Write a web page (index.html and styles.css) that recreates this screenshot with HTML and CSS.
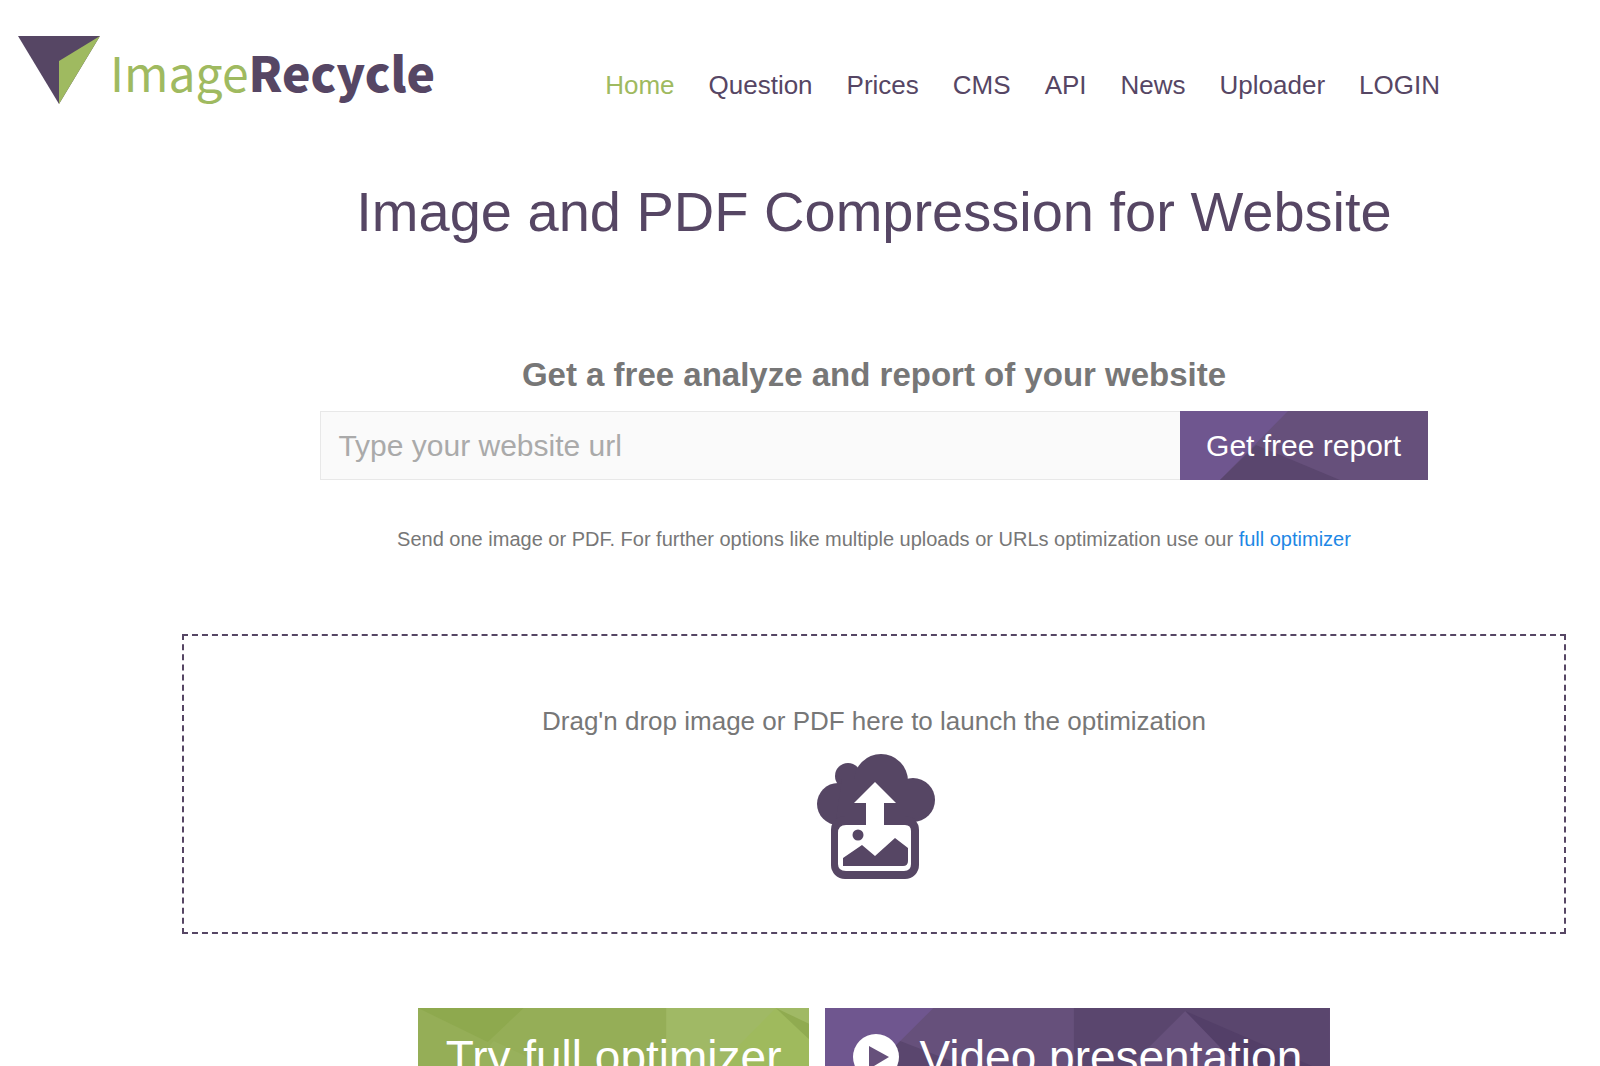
FILE: index.html
```html
<!DOCTYPE html>
<html lang="en">
<head>
    <meta charset="UTF-8">
    <meta name="viewport" content="width=device-width, initial-scale=1.0">
    <title>ImageRecycle</title>
    <link rel="stylesheet" href="styles.css">
</head>
<body>
    <header class="header">
        <a href="#" class="logo">
            <svg class="logo-mark" viewBox="0 0 82 68" aria-hidden="true">
                <path d="M0 0H82L41 68Z" fill="#564664"/>
                <path d="M82 0L41 25V68Z" fill="#9fba60"/>
            </svg>
            <span class="logo-text">Image<strong>Recycle</strong></span>
        </a>
        <nav class="nav">
            <a href="#" class="active">Home</a>
            <a href="#">Question</a>
            <a href="#">Prices</a>
            <a href="#">CMS</a>
            <a href="#">API</a>
            <a href="#">News</a>
            <a href="#">Uploader</a>
            <a href="#">LOGIN</a>
        </nav>
    </header>

    <main class="content">
        <h1>Image and PDF Compression for Website</h1>

        <form class="report">
            <label for="url">Get a free analyze and report of your website</label>
            <div class="report-row">
                <input type="text" id="url" placeholder="Type your website url">
                <button type="button" class="poly">
                    <svg class="poly-bg" viewBox="0 0 248 69" preserveAspectRatio="none" aria-hidden="true">
                        <path d="M0 0H108L40 69H0Z" fill="#6f568f"/>
                        <path d="M40 69L76 34L160 69Z" fill="#5a466e"/>
                    </svg>
                    <span>Get free report</span>
                </button>
            </div>
        </form>

        <p class="hint">Send one image or PDF. For further options like multiple uploads or URLs optimization use our <a href="#">full optimizer</a></p>

        <div class="dropzone">
            <p>Drag'n drop image or PDF here to launch the optimization</p>
            <svg class="upload-icon" viewBox="-4 0 122 126" aria-hidden="true">
                <g fill="#564664">
                    <circle cx="31" cy="22" r="13"/>
                    <circle cx="64" cy="27" r="27"/>
                    <circle cx="96" cy="46" r="22"/>
                    <circle cx="21" cy="50" r="21"/>
                    <path d="M25 25H90V72H18Z"/>
                    <rect x="14" y="62" width="88" height="63" rx="14"/>
                </g>
                <path d="M58 28L79 49H67V71H88Q94 71 94 77V110Q94 117 87 117H29Q21 117 21 110V79Q21 71 29 71H49V49H37Z" fill="#fff"/>
                <circle cx="41" cy="81" r="5.500" fill="#564664"/>
                <path d="M26 104L45 91L58 102L78 84L91 94V107Q91 112 86 112H26Z" fill="#564664"/>
            </svg>
        </div>

        <div class="actions">
            <a href="#" class="button poly green">
                <svg class="poly-bg" viewBox="0 0 393 98" preserveAspectRatio="none" aria-hidden="true">
                    <path d="M0 0L106 0L70 34Z" fill="#8ea94e"/>
                    <path d="M76 33L106 47L168 98H20Z" fill="#98b15c"/>
                    <path d="M249 0H393V98H249Z" fill="#a0b965"/>
                    <path d="M359 0L393 32V98H262Z" fill="#9fba5d"/>
                    <path d="M359 0L393 16V32Z" fill="#90ab50"/>
                </svg>
                <span>Try full optimizer</span>
            </a>
            <a href="#" class="button poly video">
                <svg class="poly-bg" viewBox="0 0 503 98" preserveAspectRatio="none" aria-hidden="true">
                    <path d="M0 0H108L10 98H0Z" fill="#6f568f"/>
                    <path d="M10 98L75 33L240 98Z" fill="#5a466e"/>
                    <path d="M248 0H503V98H248Z" fill="#5a466e"/>
                    <path d="M359 3L410 54V98H264Z" fill="#66507b"/>
                    <path d="M359 3L490 60V98H450Z" fill="#533f68"/>
                </svg>
                <svg class="play-icon" viewBox="0 0 46 46" aria-hidden="true">
                    <circle cx="23" cy="23" r="23" fill="#fff"/>
                    <path d="M16 12L36 23L16 35Z" fill="#66507b"/>
                </svg>
                <span>Video presentation</span>
            </a>
        </div>
    </main>
</body>
</html>
```

FILE: styles.css
```css
* {
    box-sizing: border-box;
}
body {
    margin: 0;
    height: 100vh;
    overflow: hidden;
    background: #fff;
    color: #777;
    font-family: "Liberation Sans", Arial, sans-serif;
}
a {
    text-decoration: none;
}
.header {
    display: flex;
    align-items: flex-start;
    justify-content: space-between;
    padding: 36px 160px 0 18px;
    height: 136px;
}
.logo {
    display: flex;
    gap: 10px;
    color: #9fba60;
}
.logo-mark {
    width: 82px;
    height: 68px;
}
.logo-text {
    font-family: "Noto Sans CJK SC", sans-serif;
    font-size: 48px;
    font-weight: 400;
    line-height: 70px;
}
.logo-text strong {
    color: #564664;
    font-weight: 900;
}
.nav {
    display: flex;
    gap: 34px;
    padding-top: 34px;
    font-size: 26px;
    line-height: 30px;
}
.nav a {
    color: #564664;
}
.nav .active {
    color: #9fba60;
}
.content {
    padding: 0 34px 0 182px;
    text-align: center;
}
h1 {
    margin: 0;
    padding-top: 44px;
    color: #564664;
    font-size: 56px;
    font-weight: 400;
    line-height: 64px;
}
.report {
    width: 80%;
    margin: 112px auto 0;
}
.report label {
    display: block;
    margin-bottom: 17px;
    font-size: 33px;
    font-weight: 700;
    line-height: 38px;
}
.report-row {
    display: flex;
    height: 69px;
}
.report input {
    flex: 1;
    min-width: 0;
    padding: 0 17px;
    border: 1px solid #e8e8e8;
    border-right: 0;
    background: #fafafa;
    color: #555;
    font: inherit;
    font-size: 30px;
}
.report input::placeholder {
    color: #aaa;
}
.report button {
    width: 248px;
    border: 0;
    padding: 0;
    font: inherit;
    font-size: 30px;
}
.poly {
    position: relative;
    background: #66507b;
    color: #fff;
}
.poly span {
    position: relative;
}
.poly-bg {
    position: absolute;
    top: 0;
    left: 0;
    width: 100%;
    height: 100%;
}
.hint {
    margin: 46px 0 0;
    font-size: 20px;
    line-height: 26px;
}
.hint a {
    color: #1e87e5;
}
.dropzone {
    display: flex;
    flex-direction: column;
    align-items: center;
    gap: 18px;
    height: 300px;
    margin-top: 82px;
    padding-top: 70px;
    border: 2px dashed #564664;
}
.dropzone p {
    margin: 0;
    font-size: 26px;
    line-height: 30px;
}
.upload-icon {
    width: 122px;
    height: 126px;
}
.actions {
    display: flex;
    justify-content: center;
    gap: 16px;
    margin-top: 74px;
}
.button {
    display: flex;
    align-items: center;
    gap: 20px;
    height: 98px;
    padding: 0 28px;
    font-size: 46px;
}
.green {
    background: #95ae57;
}
.play-icon {
    position: relative;
    width: 46px;
    height: 46px;
}
```
